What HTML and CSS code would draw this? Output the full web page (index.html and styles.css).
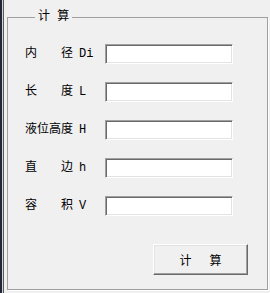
FILE: index.html
```html
<!DOCTYPE html>

<head>
    <meta name="viewport" content="width=device-width, initial-scale=1.0">
    <meta charset="utf-8">
    <title>计算</title>

    <link rel="stylesheet" href="styles.css">
</head>

<body>
    <div class="window">
        <form class="group" id="calcForm">
            <fieldset class="group__box">
                <legend class="group__title">计 算</legend>
                <div class="group__row">
                    <label class="group__label" for="di"><span class="group__name">内 径</span><span class="group__sym">Di</span></label>
                    <input type="text" id="di" class="group__input">
                </div>
                <div class="group__row">
                    <label class="group__label" for="len"><span class="group__name">长 度</span><span class="group__sym">L</span></label>
                    <input type="text" id="len" class="group__input">
                </div>
                <div class="group__row">
                    <label class="group__label" for="level"><span class="group__name">液位高度</span><span class="group__sym">H</span></label>
                    <input type="text" id="level" class="group__input">
                </div>
                <div class="group__row">
                    <label class="group__label" for="edge"><span class="group__name">直 边</span><span class="group__sym">h</span></label>
                    <input type="text" id="edge" class="group__input">
                </div>
                <div class="group__row">
                    <label class="group__label" for="vol"><span class="group__name">容 积</span><span class="group__sym">V</span></label>
                    <input type="text" id="vol" class="group__input">
                </div>
                <div class="group__actions">
                    <button class="group__button" type="button">计 算</button>
                </div>
            </fieldset>
        </form>
    </div>
</body>

</html>
```

FILE: styles.css
```css
body {
    --font-ui: "Liberation Mono", "Noto Sans CJK SC", monospace;
    --color-face: #f0f0f0;
    --color-light: #ffffff;
    --color-shade: #a0a0a0;
    --color-dark: #696969;
    margin: 0;
    height: 100vh;
    background: var(--color-face);
    font: 12px var(--font-ui);
    color: #000000;
}

.window {
    height: 100%;
    box-sizing: border-box;
    padding: 10px 2px 3px 7px;
    box-shadow: inset 2px 0 0 #1e2838, inset 3px 0 0 #d4d4d4, inset 4px 0 0 #5a5a5a;
}

.group {
    height: 100%;
    margin: 0;
}

.group__box {
    height: 100%;
    box-sizing: border-box;
    margin: 0;
    padding: 19px 19px 0 17px;
    border: 1px solid var(--color-shade);
    box-shadow: 1px 1px 0 var(--color-light);
    min-width: 0;
}

.group__title {
    margin-left: 10px;
    padding: 0 3px;
    line-height: 15px;
}

.group__row {
    display: flex;
    align-items: center;
    height: 20px;
    margin-bottom: 18px;
}

.group__label {
    display: flex;
    align-items: center;
    width: 80px;
    line-height: 14px;
}

.group__name {
    display: inline-block;
    width: 48px;
    text-align: justify;
    text-align-last: justify;
}

.group__sym {
    margin-left: 6px;
}

.group__input {
    width: 128px;
    height: 20px;
    box-sizing: border-box;
    margin: 0;
    padding: 1px 3px;
    font: 12px var(--font-ui);
    background: #ffffff;
    border: 1px solid;
    border-color: var(--color-shade) var(--color-light) var(--color-light) var(--color-shade);
    box-shadow: inset 1px 1px 0 var(--color-dark), inset -1px -1px 0 #e3e3e3;
    outline: none;
}

.group__actions {
    display: flex;
    justify-content: flex-end;
    padding-top: 10px;
}

.group__button {
    width: 95px;
    height: 31px;
    padding: 0;
    font: 12px var(--font-ui);
    word-spacing: 10.8px;
    color: #000000;
    background: var(--color-face);
    border: 1px solid;
    border-color: var(--color-light) var(--color-dark) var(--color-dark) var(--color-light);
    box-shadow: inset -1px -1px 0 var(--color-shade), inset 1px 1px 0 #e3e3e3;
    outline: none;
}
```
